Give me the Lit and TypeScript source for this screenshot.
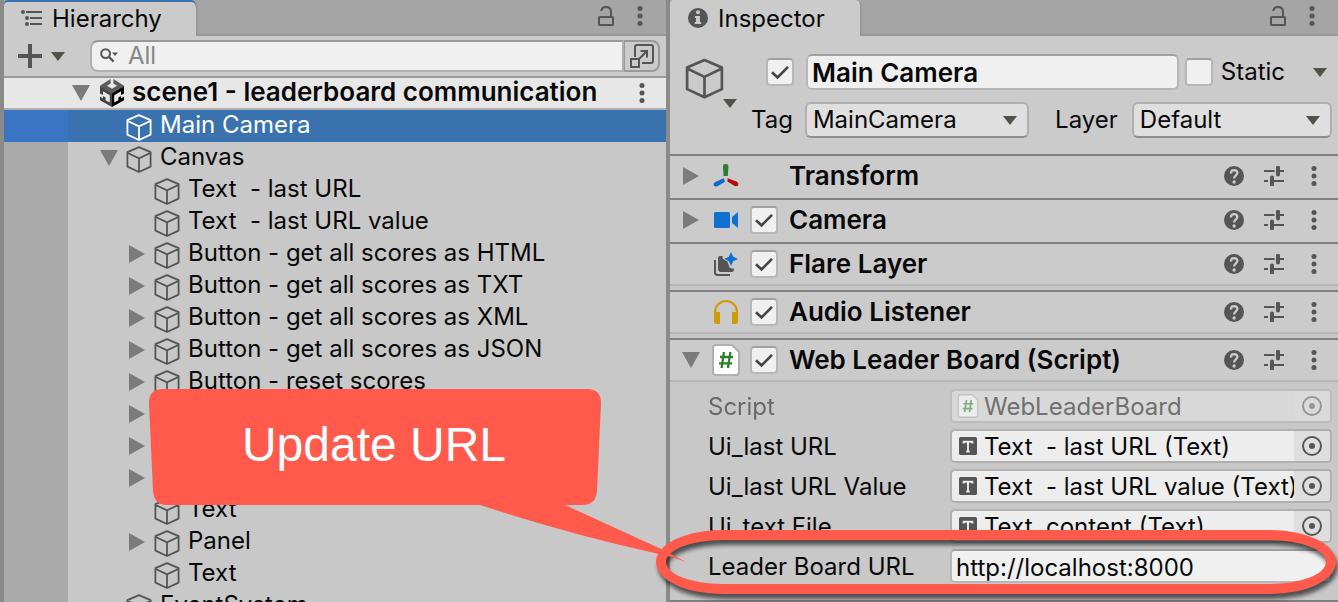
import { LitElement, html, svg, css, nothing } from "lit";
import { customElement, property } from "lit/decorators.js";

const cubePath = svg`<path d="M13 1.2 L24.6 6.2 V20.6 L13 26 L1.4 20.6 V6.2 Z M1.8 7 L13 12.4 L24.2 7 M13 12.4 V25.6"
  fill="none" stroke="currentColor" stroke-width="1.8" stroke-linejoin="round"/>`;
const cube = html`<svg class="cube" width="26" height="27" viewBox="0 0 26 27" aria-hidden="true">${cubePath}</svg>`;
const dots = html`<svg width="6" height="20" viewBox="0 0 6 20" aria-hidden="true">
  <g fill="#555"><circle cx="3" cy="2.5" r="2.5"/><circle cx="3" cy="10" r="2.5"/><circle cx="3" cy="17.5" r="2.5"/></g></svg>`;
const lock = html`<svg width="16" height="20" viewBox="0 0 16 20" aria-hidden="true">
  <rect x="1" y="11" width="14" height="8" rx="0.6" fill="none" stroke="#555" stroke-width="2"/>
  <path d="M3.3 5 C3.6 2.4 5.6 1 8 1 C11 1 13 2.8 13 5.6 V11" fill="none" stroke="#555" stroke-width="2"/></svg>`;
const caret = html`<svg class="caret" width="14" height="9" viewBox="0 0 14 9" aria-hidden="true"><path d="M0 0H14L7 9Z" fill="#52524a"/></svg>`;
const right = html`<svg width="16" height="18" viewBox="0 0 16 18" aria-hidden="true"><path d="M0 0L16 9L0 18Z" fill="#7b7b7b"/></svg>`;
const down = html`<svg width="18" height="16" viewBox="0 0 18 16" aria-hidden="true"><path d="M0 0H18L9 16Z" fill="#7b7b7b"/></svg>`;
const help = html`<svg width="20" height="20" viewBox="0 0 20 20" aria-hidden="true"><circle cx="10" cy="10" r="10" fill="#555"/>
  <path d="M6.9 7.4 C6.9 5.3 8.2 4.1 10.1 4.1 C12.1 4.1 13.3 5.3 13.3 7 C13.3 9.4 10.1 9.4 10.1 12.6" fill="none" stroke="#cbcbcb" stroke-width="2.3"/>
  <circle cx="10.1" cy="16" r="1.7" fill="#cbcbcb"/></svg>`;
const sliders = html`<svg width="20" height="20" viewBox="0 0 20 20" aria-hidden="true">
  <path d="M0 5H10.6M14 5H20M0 15H4M8 15H20" stroke="#555" stroke-width="2"/>
  <path d="M14 1.6V8.4M8 11.6V18.4" stroke="#555" stroke-width="4" stroke-linecap="round"/></svg>`;
const hash = html`<svg width="28" height="32" viewBox="0 0 28 32" aria-hidden="true">
  <path d="M4 1 H20 L27 8 V28 Q27 31 24 31 H4 Q1 31 1 28 V4 Q1 1 4 1Z" fill="#fff" stroke="#b0b0b0" stroke-width="2"/>
  <path d="M12 8L9.6 24M18.4 8L16 24M8 13H21M7 19.4H20" stroke="#2b7f2b" stroke-width="2.3" fill="none"/></svg>`;
const hashSmall = html`<svg width="22" height="24" viewBox="0 0 28 32" aria-hidden="true">
  <path d="M4 1 H20 L27 8 V28 Q27 31 24 31 H4 Q1 31 1 28 V4 Q1 1 4 1Z" fill="#ececec" stroke="#c4c4c4" stroke-width="2"/>
  <path d="M12 8L9.6 24M18.4 8L16 24M8 13H21M7 19.4H20" stroke="#83aa83" stroke-width="2.3" fill="none"/></svg>`;
const textIcon = html`<svg width="18" height="18" viewBox="0 0 18 18" aria-hidden="true"><rect width="18" height="18" rx="1.5" fill="#555"/>
  <path d="M4.6 6.6V4.8H13.4V6.6M9 4.8V14.6M7.2 14.6H10.8" fill="none" stroke="#ededed" stroke-width="1.9"/></svg>`;
const picker = html`<svg width="20" height="20" viewBox="0 0 20 20" aria-hidden="true"><circle cx="10" cy="10" r="9" fill="none" stroke="#555" stroke-width="2"/><circle cx="10" cy="10" r="3" fill="#555"/></svg>`;

const axes = html`<svg width="26" height="24" viewBox="0 0 26 24" aria-hidden="true">
  <path d="M10 2.4Q10 0 12.6 0Q15.4 0 15.4 2.4L14.8 12H10.6Z" fill="#2f7d32"/>
  <path d="M10.8 14.2L12 17.8L4.4 22.2Q2 23.2 .8 21.4Q0 19.4 1.8 18.2Z" fill="#1168cf"/>
  <path d="M14.6 14.2L24 17.8Q26 19 25.2 21.2Q24 23 21.8 22L14.4 17.6Z" fill="#b00d0d"/></svg>`;
const videoIcon = html`<svg width="24" height="16" viewBox="0 0 24 16" aria-hidden="true"><rect width="16" height="16" rx="1.6" fill="#1070d0"/><path d="M18 5L24 0V16L18 11Z" fill="#1070d0"/></svg>`;
const flareIcon = html`<svg width="24" height="24" viewBox="0 0 24 24" aria-hidden="true">
  <path d="M1 8V20.6Q1 23 3.4 23H16" fill="none" stroke="#555" stroke-width="2"/>
  <path d="M4 6Q4 4 6 4H8.6V6.6L11 8.2L13.4 9.6L15.6 15.4L17.6 16.6H20V18Q19.6 20 17.6 20H7Q4 20 4 17Z" fill="#555"/>
  <path d="M17 0L19.2 4.8L24 7L19.2 9.2L17 14L14.8 9.2L10 7L14.8 4.8Z" fill="#1070d0"/></svg>`;
const phonesIcon = html`<svg width="24" height="24" viewBox="0 0 24 24" aria-hidden="true">
  <path d="M1 14V12A11 11 0 0 1 23 12V14" fill="none" stroke="#cf9a05" stroke-width="2"/>
  <path d="M0 12H6V24H2Q0 24 0 22ZM24 12H18V24H22Q24 24 24 22Z" fill="#cf9a05"/></svg>`;
const sceneIcon = html`<svg width="24" height="28" viewBox="0 0 24 28" aria-hidden="true" fill-rule="evenodd">
  <path d="M10.6 0V4.4L7 6.8L12 9.8L17 6.8L13.4 4.4V0L24 6.8V8L12 14.6L0 8V6.8Z" fill="#5c5c5c"/>
  <path d="M0 7.6L12 14.2V28L0 21.2V17.6L3 19.4V16L0 14.4ZM3 12.2V17L5.6 18.6V21.2L9.8 23.6V16.2Z" fill="#444"/>
  <path d="M24 7.6L12 14.2V28L24 21.2V17.6L21 19.4V16L24 14.4ZM21 12.2V17L18.4 18.6V21.2L14.2 23.6V16.2Z" fill="#000"/></svg>`;
const listIcon = html`<svg width="22" height="17" viewBox="0 0 22 17" aria-hidden="true">
  <g fill="#555"><circle cx="2" cy="2" r="2"/><circle cx="6" cy="8" r="2"/><circle cx="6" cy="14" r="2"/></g>
  <path d="M5 2H21M9 8H21M9 14H21" stroke="#555" stroke-width="2"/></svg>`;
const infoIcon = html`<svg width="20" height="20" viewBox="0 0 20 20" aria-hidden="true"><circle cx="10" cy="10" r="10" fill="#555"/>
  <path d="M10 2.2a2 2 0 1 1 0 4a2 2 0 1 1 0-4M7 8H12V14H13.2V16H6.8V14H8V10H7Z" fill="#cbcbcb"/></svg>`;
const searchIcon = html`<svg width="20" height="16" viewBox="0 0 20 16" aria-hidden="true"><circle cx="5.6" cy="5.6" r="4.4" fill="none" stroke="#555" stroke-width="2"/>
  <path d="M8.8 8.8L13.6 13.6" stroke="#555" stroke-width="2.2"/><path d="M12 4.6H18L15 8Z" fill="#555"/></svg>`;
const popIcon = html`<svg width="24" height="24" viewBox="0 0 24 24" aria-hidden="true" fill="none" stroke="#555" stroke-width="2">
  <path d="M5 13V3Q5 1 7 1H21Q23 1 23 3V17Q23 19 21 19H12"/><rect x="1" y="15" width="8" height="8"/><path d="M9 15L17 7M10.6 7H17V13.6"/></svg>`;
const plusIcon = html`<svg width="24" height="24" viewBox="0 0 24 24" aria-hidden="true"><path d="M12 0V24M0 12H24" stroke="#555" stroke-width="4"/></svg>`;

const shared = css`
  * { box-sizing: border-box; }
  button { border: 0; padding: 0; margin: 0; background: none; font: inherit; color: inherit; display: flex; align-items: center; justify-content: center; }
  input, select { font: inherit; color: inherit; margin: 0; min-width: 0; }
  svg { display: block; flex: none; }
  .tabbar { display: flex; flex: none; height: 36px; background: #a5a5a5; box-shadow: inset 0 -2px #999; align-items: center; }
  .tab { align-self: stretch; display: flex; align-items: center; background: #cbcbcb; border-right: 2px solid #999; border-radius: 4px 6px 0 0; }
  .tab span { padding-top: 2px; }
  .tools { margin-left: auto; display: flex; align-items: center; gap: 23px; padding: 0 23px 4px 0; }
`;

type Item = { name: string; level: number; open?: boolean; branch?: boolean; selected?: boolean };

const items: Item[] = [
  { name: "Main Camera", level: 0, selected: true },
  { name: "Canvas", level: 0, branch: true, open: true },
  { name: "Text  - last URL", level: 1 },
  { name: "Text  - last URL value", level: 1 },
  { name: "Button - get all scores as HTML", level: 1, branch: true },
  { name: "Button - get all scores as TXT", level: 1, branch: true },
  { name: "Button - get all scores as XML", level: 1, branch: true },
  { name: "Button - get all scores as JSON", level: 1, branch: true },
  { name: "Button - reset scores", level: 1, branch: true },
  { name: "", level: 1, branch: true },
  { name: "", level: 1, branch: true },
  { name: "", level: 1, branch: true },
  { name: "Text", level: 1 },
  { name: "Panel", level: 1, branch: true },
  { name: "Text", level: 1 },
  { name: "EventSystem", level: 0 },
];

@customElement("hierarchy-panel")
export class HierarchyPanel extends LitElement {
  static styles = [shared, css`
    :host { display: flex; flex-direction: column; background: #c8c8c8; min-width: 0; overflow: hidden; }
    .tab { width: 194px; padding-left: 17px; gap: 9px; box-shadow: inset 0 2px #3a72b0; }
    .bar { display: flex; flex: none; height: 42px; align-items: center; background: #cbcbcb; border-bottom: 2px solid #999; padding: 0 6px 0 14px; }
    .add { gap: 9px; }
    .search { flex: 1; display: flex; align-items: center; gap: 8px; height: 32px; margin-left: 25px; padding-left: 8px; background: #f0f0f0; border: 2px solid #b0b0b0; border-top-color: #999; border-radius: 8px 0 0 8px; }
    .search input { flex: 1; border: 0; background: none; outline: 0; padding: 0; }
    .search input::placeholder { color: #868686; opacity: 1; }
    .pop { width: 36px; height: 32px; border: 2px solid #999; border-left-width: 1px; border-radius: 0 8px 8px 0; }
    .row { display: flex; flex: none; align-items: center; height: 32px; }
    .scene { background: #e7e7e7; border-bottom: 2px solid #b0b0b0; font-weight: 600; font-size: 26px; padding: 0 21px 0 66px; }
    .scene .more { margin-left: auto; }
    .scene .fold { margin-right: 8px; }
    .gutter { width: 64px; align-self: stretch; background: #aaaaaa; flex: none; }
    .row svg.cube { color: #555; margin-top: 2px; }
    .lead { width: 30px; flex: none; }
    .lead.deep { width: 58px; }
    .fold { width: 22px; height: 18px; margin-right: 6px; }
    .name { white-space: pre; margin-left: 8px; padding-bottom: 2px; }
    .selected { background: #3a72b0; color: #fff; }
    .selected .gutter { background: #3b74c2; }
    .row.selected svg.cube { color: #fff; }
  `];

  render() {
    return html`
      <div class="tabbar">
        <div class="tab">${listIcon}<span>Hierarchy</span></div>
        <div class="tools"><button aria-label="Lock">${lock}</button><button aria-label="Menu">${dots}</button></div>
      </div>
      <div class="bar">
        <button class="add" aria-label="Create">${plusIcon}${caret}</button>
        <label class="search">${searchIcon}<input type="text" placeholder="All" aria-label="Search"></label>
        <button class="pop" aria-label="Open search">${popIcon}</button>
      </div>
      <div class="row scene">
        <button class="fold" aria-label="Collapse scene">${down}</button>${sceneIcon}
        <span class="name">scene1 - leaderboard communication</span>
        <button class="more" aria-label="Scene menu">${dots}</button>
      </div>
      ${items.map((item) => html`
        <div class="row ${item.selected ? "selected" : ""}">
          <span class="gutter"></span>
          <span class="lead ${item.level ? "deep" : ""}"></span>
          ${item.branch
            ? html`<button class="fold" aria-label="Toggle">${item.open ? down : right}</button>`
            : html`<span class="fold"></span>`}
          ${cube}<span class="name">${item.name}</span>
        </div>`)}
    `;
  }
}

@customElement("check-box")
export class CheckBox extends LitElement {
  @property({ type: Boolean }) checked = false;
  @property() name = "";
  static styles = css`
    :host { display: block; width: 28px; height: 28px; flex: none; }
    label { display: grid; width: 28px; height: 28px; }
    input, svg { grid-area: 1 / 1; }
    input { appearance: none; margin: 0; width: 28px; height: 28px; background: #f0f0f0; border: 2px solid #b7b7b7; border-top-color: #a0a0a0; border-radius: 4px; }
    svg { display: none; pointer-events: none; }
    input:checked + svg { display: block; }
  `;
  render() {
    return html`<label><input type="checkbox" aria-label=${this.name} .checked=${this.checked}>
      <svg width="28" height="28" viewBox="0 0 28 28" aria-hidden="true"><path d="M6 14.2L11.6 19.4L22 8.8" fill="none" stroke="#444" stroke-width="2.6"/></svg></label>`;
  }
}

type Component = { name: string; icon: unknown; fold?: "open" | "closed"; toggle?: boolean; tail: string };

const components: Component[] = [
  { name: "Transform", icon: axes, fold: "closed", tail: "short" },
  { name: "Camera", icon: videoIcon, fold: "closed", toggle: true, tail: "short" },
  { name: "Flare Layer", icon: flareIcon, toggle: true, tail: "long" },
  { name: "Audio Listener", icon: phonesIcon, toggle: true, tail: "long" },
  { name: "Web Leader Board (Script)", icon: hash, fold: "open", toggle: true, tail: "body" },
];

const refs = [
  { label: "Script", value: "WebLeaderBoard", disabled: true },
  { label: "Ui_last URL", value: "Text  - last URL (Text)" },
  { label: "Ui_last URL Value", value: "Text  - last URL value (Text)" },
  { label: "Ui_text File", value: "Text  content (Text)" },
];

@customElement("inspector-panel")
export class InspectorPanel extends LitElement {
  static styles = [shared, css`
    :host { display: flex; flex-direction: column; background: #c8c8c8; min-width: 0; }
    .tab { width: 192px; padding-left: 18px; gap: 10px; }
    .object { display: grid; grid-template-columns: auto minmax(0, 1fr); height: 118px; background: #cbcbcb; padding: 18px 6px 0 15px; gap: 12px; }
    .kind { display: block; width: 54px; align-self: start; color: #555; }
    .kind .caret { margin-left: 38px; }
    .big { margin-top: 4px; }
    .lines { display: flex; flex-direction: column; gap: 12px; }
    .line { display: flex; align-items: center; height: 36px; }
    .line.first { padding-left: 15px; }
    .name { flex: 1; height: 36px; margin: 0 6px 0 12px; padding: 0 4px; font-weight: 600; font-size: 26px; background: #f0f0f0; border: 2px solid #b7b7b7; border-top-color: #a0a0a0; border-radius: 6px; }
    .static { margin: 0 28px 0 8px; }
    .first > button { margin-right: 5px; }
    .drop { display: grid; align-items: center; height: 36px; min-width: 0; }
    .drop select { grid-area: 1 / 1; appearance: none; width: 100%; height: 36px; padding: 0 6px; background: #dfdfdf; border: 2px solid #b0b0b0; border-bottom-color: #8f8f8f; border-radius: 6px; }
    .drop svg { grid-area: 1 / 1; justify-self: end; margin-right: 12px; pointer-events: none; }
    .tag { flex: 224 0 0; margin-left: 12px; }
    .layer { flex: 200 0 0; margin-left: 14px; }
    .gap { margin-left: 26px; }
    .head { display: flex; align-items: center; height: 42px; border-top: 2px solid #808080; background: #cbcbcb; padding-right: 21px; }
    .fold { width: 20px; margin: 0 11px 0 11px; }
    .icon { width: 28px; display: flex; justify-content: center; }
    .box { width: 28px; margin: 0 11px 0 10px; }
    .title { flex: 1; font-weight: 600; font-size: 26px; }
    .actions { display: flex; align-items: center; gap: 20px; }
    .actions button:last-child { margin-left: 7px; }
    .short { height: 2px; background: #cbcbcb; }
    .long { height: 6px; border-top: 2px solid #b7b7b7; }
    .body { border-top: 2px solid #b7b7b7; border-bottom: 2px solid #808080; padding: 7px 6px 17px 38px; display: flex; flex-direction: column; gap: 6px; }
    .field { display: flex; align-items: center; height: 34px; position: relative; }
    .field > label { width: 242px; flex: none; padding-top: 2px; }
    .ref { flex: 1; min-width: 0; display: flex; align-items: center; height: 34px; background: #ededed; border: 2px solid #b0b0b0; border-radius: 5px; overflow: hidden; }
    .mark { width: 32px; display: flex; justify-content: center; flex: none; }
    .ref input { flex: 1; border: 0; padding: 2px 0 0; background: none; outline: 0; }
    .ref button { width: 36px; align-self: stretch; background: #dedede; }
    .disabled > label { opacity: .5; }
    .disabled .ref { background: #d8d8d8; border-color: #bcbcbc; }
    .disabled input { color: #707070; }
    .disabled button { background: #dadada; }
    .disabled button svg { opacity: .5; }
    .url { flex: 1; height: 34px; background: #f0f0f0; border: 2px solid #b7b7b7; border-top-color: #a0a0a0; border-radius: 5px; padding: 2px 4px 0; outline: 0; }
    .ring { position: absolute; inset: -19px -4px -11px -52px; border: 10px solid #ff5a4b; border-radius: 66px / 32px; filter: drop-shadow(2px 5px 2px rgba(0, 0, 0, .6)); pointer-events: none; }
  `];

  render() {
    return html`
      <div class="tabbar">
        <div class="tab">${infoIcon}<span>Inspector</span></div>
        <div class="tools"><button aria-label="Lock">${lock}</button><button aria-label="Menu">${dots}</button></div>
      </div>
      <div class="object">
        <button class="kind" aria-label="Select icon">
          <svg class="big" width="39" height="41" viewBox="0 0 26 27" aria-hidden="true">${cubePath}</svg>${caret}
        </button>
        <div class="lines">
          <div class="line first">
            <check-box checked name="Active"></check-box>
            <input class="name" type="text" aria-label="Name" .value=${"Main Camera"}>
            <check-box name="Static"></check-box><span class="static">Static</span>
            <button aria-label="Static flags">${caret}</button>
          </div>
          <div class="line">
            <label for="tag">Tag</label>
            <div class="drop tag"><select id="tag"><option>MainCamera</option></select>${caret}</div>
            <label class="gap" for="layer">Layer</label>
            <div class="drop layer"><select id="layer"><option>Default</option></select>${caret}</div>
          </div>
        </div>
      </div>
      ${components.map((c) => html`
        <div class="head">
          <button class="fold" aria-label="Toggle ${c.name}">${c.fold === "open" ? down : c.fold === "closed" ? right : nothing}</button>
          <span class="icon">${c.icon}</span>
          <span class="box">${c.toggle ? html`<check-box checked name=${c.name}></check-box>` : nothing}</span>
          <span class="title">${c.name}</span>
          <span class="actions"><button aria-label="Help">${help}</button><button aria-label="Presets">${sliders}</button><button aria-label="Menu">${dots}</button></span>
        </div>
        ${c.tail === "body" ? nothing : html`<div class=${c.tail}></div>`}`)}
      <div class="body">
        ${refs.map((r, i) => html`
          <div class="field ${r.disabled ? "disabled" : ""}">
            <label for="ref${i}">${r.label}</label>
            <div class="ref">
              <span class="mark">${r.disabled ? hashSmall : textIcon}</span>
              <input id="ref${i}" type="text" readonly ?disabled=${r.disabled} .value=${r.value}>
              <button aria-label="Pick object">${picker}</button>
            </div>
          </div>`)}
        <div class="field">
          <label for="url">Leader Board URL</label>
          <input id="url" class="url" type="text" .value=${"http://localhost:8000"}>
          <span class="ring"></span>
        </div>
      </div>
    `;
  }
}

@customElement("app-root")
export class AppRoot extends LitElement {
  static styles = css`
    :host { display: block; position: relative; height: 100vh; overflow: hidden; background: #8a8a88; font: 24px/30px Inter, "Liberation Sans", sans-serif; color: #090909; }
    .split { display: grid; grid-template-columns: 331fr 334fr; gap: 4px; padding-left: 4px; height: 100%; }
    .callout { position: absolute; left: 149px; top: 389px; width: 540px; height: 176px; pointer-events: none; }
    .shape { position: absolute; inset: 0; }
    .caption { position: absolute; inset: 0 90px 64px 0; display: flex; align-items: center; justify-content: center; color: #fff; font: 48px/56px "Liberation Sans", Arial, sans-serif; }
  `;

  render() {
    return html`
      <div class="split">
        <hierarchy-panel></hierarchy-panel>
        <inspector-panel></inspector-panel>
      </div>
      <div class="callout">
        <svg class="shape" width="540" height="176" viewBox="0 0 540 176" aria-hidden="true">
          <path d="M14 0H438Q452 0 452 14L448 102Q447 116 433 116H416L510 159Q524 166 537 173Q524 168 510 165Q420 145 331 116H18Q5 116 4 102L0 14Q0 0 14 0Z" fill="#ff5a4b"/>
        </svg>
        <div class="caption">Update URL</div>
      </div>
    `;
  }
}
